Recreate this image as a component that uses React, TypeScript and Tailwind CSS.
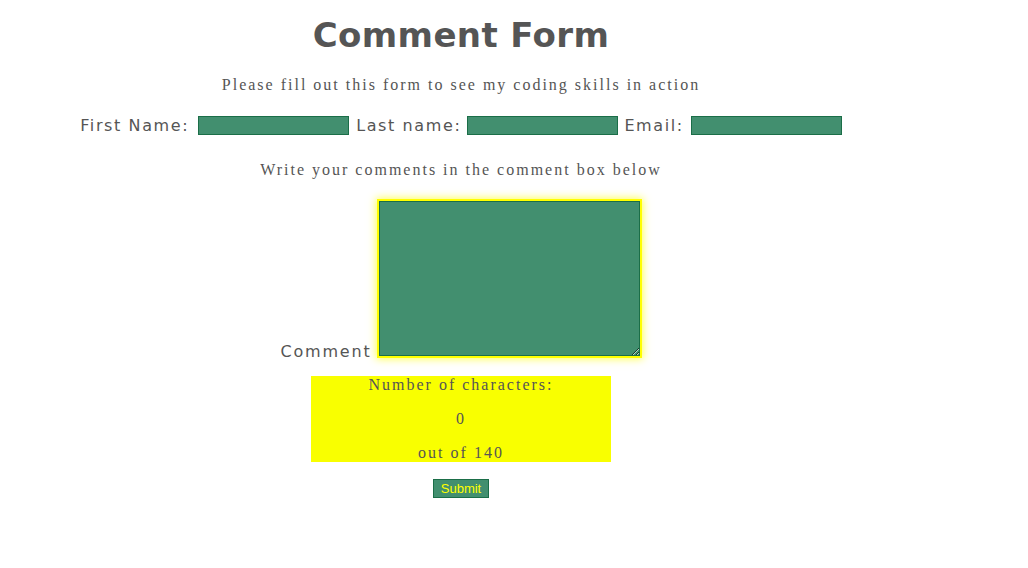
export default function App() {
  const label = "font-['DejaVu_Sans',sans-serif] text-[16px] tracking-[1.6px] text-[#555]";
  const input = "w-[151px] h-[19px] bg-[#428f6f] border border-[#1b6e48] outline-none";
  const serif = "font-['Liberation_Serif',serif] text-[16px] text-[#555]";

  return (
    <div className="w-[922px] text-center text-[#555] bg-white">
      <h1 className="pt-[15px] font-['DejaVu_Sans',sans-serif] font-bold text-[34px] leading-[40px] tracking-[0.4px] text-[#555]">
        Comment Form
      </h1>
      <p className={`${serif} mt-[20px] leading-[20px] tracking-[2px]`}>
        Please fill out this form to see my coding skills in action
      </p>

      {/* name / email row */}
      <div className="mt-[21px] flex justify-center items-center h-[19px]">
        <span className={`${label} mr-[9px]`}>First Name:</span>
        <input className={input} />
        <span className={`${label} ml-[7px] mr-[6px]`}>Last name:</span>
        <input className={input} />
        <span className={`${label} ml-[6px] mr-[7px]`}>Email:</span>
        <input className={input} />
      </div>

      <p className={`${serif} mt-[25px] leading-[20px] tracking-[2px]`}>
        Write your comments in the comment box below
      </p>

      {/* comment box */}
      <div className="mt-[19px] flex justify-center items-end gap-[5px]">
        <span className={`${label} tracking-[1.8px] leading-[20px] mb-[-4px]`}>Comment</span>
        <textarea
          autoFocus
          className="block w-[265px] h-[159px] bg-[#428f6f] border-2 border-[#ffff00] shadow-[inset_0_0_0_1px_#1b6e48,0_0_8px_1px_#ffff55] outline-none caret-[#ffff00]"
        />
      </div>

      {/* character counter */}
      <div className={`${serif} mx-auto mt-[18px] w-[300px] h-[86px] bg-[#f9ff00] leading-[18px] tracking-[2px]`}>
        <p>Number of characters:</p>
        <p className="mt-[16px]">0</p>
        <p className="mt-[16px]">out of 140</p>
      </div>

      <button className="mt-[17px] h-[19px] px-[7px] bg-[#428f6f] border border-[#1b6e48] text-[#ffff00] font-['Liberation_Sans',sans-serif] text-[13px] leading-[17px]">
        Submit
      </button>
    </div>
  );
}
